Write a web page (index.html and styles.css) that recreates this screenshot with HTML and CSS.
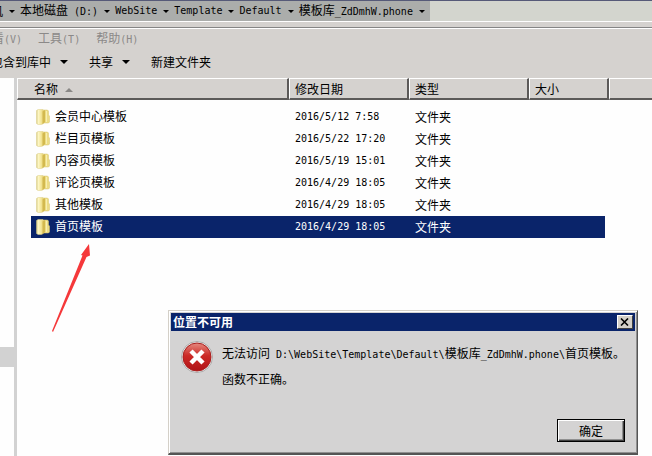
FILE: index.html
```html
<!DOCTYPE html>
<html lang="zh-CN">
<head>
    <meta charset="UTF-8">
    <meta name="viewport" content="width=device-width, initial-scale=1.0">
    <title>模板库_ZdDmhW.phone</title>
    <link rel="stylesheet" href="styles.css">
</head>
<body>

<svg class="defs" width="0" height="0" aria-hidden="true">
    <defs>
        <linearGradient id="fold" x1="0" y1="0" x2="1" y2="0">
            <stop offset="0" stop-color="#d9cf86"/>
            <stop offset="0.3" stop-color="#fdf6c4"/>
            <stop offset="1" stop-color="#ecd978"/>
        </linearGradient>
        <linearGradient id="red" x1="0" y1="0" x2="0" y2="1">
            <stop offset="0" stop-color="#e58a80"/>
            <stop offset="0.45" stop-color="#cc2a26"/>
            <stop offset="1" stop-color="#b01216"/>
        </linearGradient>
        <symbol id="folder" viewBox="0 0 14 16">
            <path d="M7 1h4.500l1 1v4l1 1v6l-1 1H7z" fill="#ecdc84" stroke="#d8c670" stroke-width=".5"/>
            <path d="M.5 1.500 2 .5h5v14l-1.500 1H2l-1.500-1z" fill="url(#fold)" stroke="#dccf88" stroke-width=".5"/>
            <path d="M6.500 2.500 9 1v12l-2.500 2.500z" fill="#d3b94e"/>
            <path d="M10.500 2v11" stroke="#f8efb0"/>
        </symbol>
    </defs>
</svg>

<div class="explorer">
    <nav class="address">
        <ol class="crumbs">
            <li><a href="#">计算机</a></li>
            <li><a href="#">本地磁盘<span class="en"> (D:)</span></a></li>
            <li><a href="#" class="en">WebSite</a></li>
            <li><a href="#" class="en">Template</a></li>
            <li><a href="#" class="en">Default</a></li>
            <li><a href="#">模板库<span class="en">_ZdDmhW.phone</span></a></li>
        </ol>
    </nav>

    <div class="menubar">
        <button type="button">查看<span class="en">(V)</span></button>
        <button type="button">工具<span class="en">(T)</span></button>
        <button type="button">帮助<span class="en">(H)</span></button>
    </div>

    <div class="toolbar">
        <button type="button" class="drop">包含到库中</button>
        <button type="button" class="drop">共享</button>
        <button type="button">新建文件夹</button>
    </div>

    <div class="panes">
        <div class="tree">
            <div class="tree-top"></div>
            <div class="tree-bottom"></div>
        </div>
        <div class="list">
            <table class="files">
                <colgroup>
                    <col class="c-name">
                    <col class="c-date">
                    <col class="c-type">
                    <col class="c-size">
                    <col>
                </colgroup>
                <thead>
                    <tr>
                        <th class="sorted">名称</th>
                        <th>修改日期</th>
                        <th>类型</th>
                        <th>大小</th>
                        <th></th>
                    </tr>
                </thead>
                <tbody>
                    <tr><td><svg class="folder"><use href="#folder"/></svg>会员中心模板</td><td class="en">2016/5/12 7:58</td><td>文件夹</td><td></td></tr>
                    <tr><td><svg class="folder"><use href="#folder"/></svg>栏目页模板</td><td class="en">2016/5/22 17:20</td><td>文件夹</td><td></td></tr>
                    <tr><td><svg class="folder"><use href="#folder"/></svg>内容页模板</td><td class="en">2016/5/19 15:01</td><td>文件夹</td><td></td></tr>
                    <tr><td><svg class="folder"><use href="#folder"/></svg>评论页模板</td><td class="en">2016/4/29 18:05</td><td>文件夹</td><td></td></tr>
                    <tr><td><svg class="folder"><use href="#folder"/></svg>其他模板</td><td class="en">2016/4/29 18:05</td><td>文件夹</td><td></td></tr>
                    <tr class="selected"><td><svg class="folder"><use href="#folder"/></svg>首页模板</td><td class="en">2016/4/29 18:05</td><td>文件夹</td><td></td></tr>
                </tbody>
            </table>
        </div>
    </div>
</div>

<svg class="pointer" width="40" height="90" viewBox="0 0 40 90" aria-hidden="true">
    <path d="M0 87 30.500 11.500 29 11 37 0 38 11.500 34.500 13 1 88z" fill="#f5383a"/>
</svg>

<div class="dialog" role="alertdialog" aria-labelledby="dlg-title">
    <div class="titlebar">
        <h1 id="dlg-title">位置不可用</h1>
        <button type="button" class="close" aria-label="关闭">
            <svg width="9" height="8" viewBox="0 0 9 8"><path d="M1 .5l7 7M8 .5l-7 7" stroke="#000" stroke-width="1.600"/></svg>
        </button>
    </div>
    <div class="message">
        <svg class="error" width="32" height="32" viewBox="0 0 32 32">
            <circle cx="16" cy="16" r="15.500" fill="#f1eeee" stroke="#9a9a9a" stroke-width=".8"/>
            <circle cx="16" cy="16" r="14" fill="url(#red)" stroke="#a8201f"/>
            <path d="M10 10l12 12M22 10l-12 12" stroke="#fff" stroke-width="4.500"/>
        </svg>
        <div class="text">
            <p>无法访问<span class="en"> D:\WebSite\Template\Default\</span>模板库<span class="en">_ZdDmhW.phone\</span>首页模板。</p>
            <p>函数不正确。</p>
        </div>
    </div>
    <div class="actions">
        <button type="button" class="ok">确定</button>
    </div>
</div>

</body>
</html>
```
FILE: styles.css
```css
* {box-sizing: border-box;}
body {
    margin: 0;
    background: #fefefe;
    color: #000;
    font: 12px/18px "Noto Sans CJK SC", sans-serif;
    overflow: hidden;
}
button {margin: 0; padding: 0; border: 0; background: none; color: inherit; font: inherit; white-space: nowrap;}
.defs {position: absolute;}
.en {font-family: "DejaVu Sans Mono", "Liberation Mono", monospace; font-size: 10px;}

.explorer {display: flex; flex-direction: column; min-height: 100vh; background: #d5d2cf;}

/* address bar */
.address {
    height: 22px;
    border-top: 1px solid #565a78;
    border-bottom: 1px solid #fff;
    background: #d3d5ce;
    overflow: hidden;
}
.crumbs {display: inline-flex; margin: 0 0 0 -33px; padding: 1px 0; list-style: none; background: #abadab;}
.crumbs li {display: flex; align-items: center; height: 18px; white-space: nowrap;}
.crumbs a {color: #000; text-decoration: none;}
.crumbs li::after {
    content: "";
    margin: 0 5px 0 6px;
    border: solid transparent;
    border-width: 3px 3px 0;
    border-top-color: #000;
}

/* menu and command bars */
.menubar {
    display: flex;
    gap: 16px;
    height: 24px;
    margin-top: 5px;
    padding-bottom: 2px;
    border-top: 1px solid #858585;
    box-shadow: inset 0 1px #fff;
    color: #8b8988;
}
.menubar button:first-child {margin-left: -20px;}
.toolbar {display: flex; gap: 21px; height: 27px; padding-bottom: 6px;}
.toolbar button:first-child {margin-left: -9px;}
.toolbar .drop {display: flex; align-items: center;}
.toolbar .drop::after {
    content: "";
    margin-left: 9px;
    border: solid transparent;
    border-width: 4px 4px 0;
    border-top-color: #000;
}

.panes {display: flex; flex: 1;}
.tree {display: flex; flex-direction: column; gap: 20px; width: 17px; padding-right: 3px; background: #d2d2d2;}
.tree-top {flex: 3; background: #fefefe;}
.tree-bottom {flex: 1; background: #fefefe;}
.list {flex: 1; background: #fefefe;}

/* file list */
.files {width: 100%; table-layout: fixed; border-spacing: 0;}
.c-name {width: 272px;}
.c-date, .c-type {width: 120px;}
.c-size {width: 80px;}
.files th {
    height: 22px;
    padding: 0 5px;
    border: 1px solid #fff;
    border-right: 2px solid #5c5a59;
    border-bottom: 2px solid #5c5a59;
    background: #d5d2cf;
    font-weight: normal;
    line-height: 18px;
    text-align: left;
}
.files th:first-child {padding-left: 16px;}
.files th:last-child {border-right: 0;}
.sorted::after {
    content: "";
    display: inline-block;
    margin-left: 7px;
    vertical-align: middle;
    border: solid transparent;
    border-width: 0 4px 4px;
    border-bottom-color: #8a8886;
}
.files tbody::before {content: ""; display: block; height: 6px;}
.files td {height: 22px; padding: 0 6px; background-clip: padding-box; white-space: nowrap;}
.files td:first-child {padding-left: 5px; border-left: 14px solid transparent;}
.files td:last-child {border-right: 4px solid transparent;}
.folder {width: 14px; height: 16px; margin: 0 5px 2px 0; vertical-align: middle;}
.selected td {background-color: #0a246a; color: #fff;}

/* red arrow drawn over the list */
.pointer {position: absolute; left: 52px; top: 244px;}

/* error dialog */
.dialog {
    position: absolute;
    left: 168px;
    top: 310px;
    padding: 2px;
    border: 1px solid #d4d0c8;
    border-right-color: #555;
    border-bottom: 2px solid #555;
    box-shadow: inset 1px 1px #fff, inset -1px -1px #909090;
    background: #d4d3d3;
}
.titlebar {display: flex; align-items: center; justify-content: space-between; height: 18px; padding: 0 2px; background: #0a246a;}
.titlebar h1 {margin: 0; color: #fff; font-size: 12px; font-weight: bold;}
.close {
    display: flex;
    align-items: center;
    justify-content: center;
    width: 16px;
    height: 14px;
    border: 1px solid #fff;
    border-right-color: #404040;
    border-bottom-color: #404040;
    background: #d4d0c8;
}
.message {display: flex; gap: 9px; padding: 10px 10px 0;}
.text p {margin: 0; line-height: 24px; white-space: nowrap;}
.actions {display: flex; justify-content: flex-end; padding: 28px 10px 9px;}
.ok {
    width: 68px;
    height: 23px;
    border: 1px solid #000;
    box-shadow: inset 1px 1px #fff, inset -1px -1px #404040, inset -2px -2px #909090;
    background: #d4d3d3;
}
```
